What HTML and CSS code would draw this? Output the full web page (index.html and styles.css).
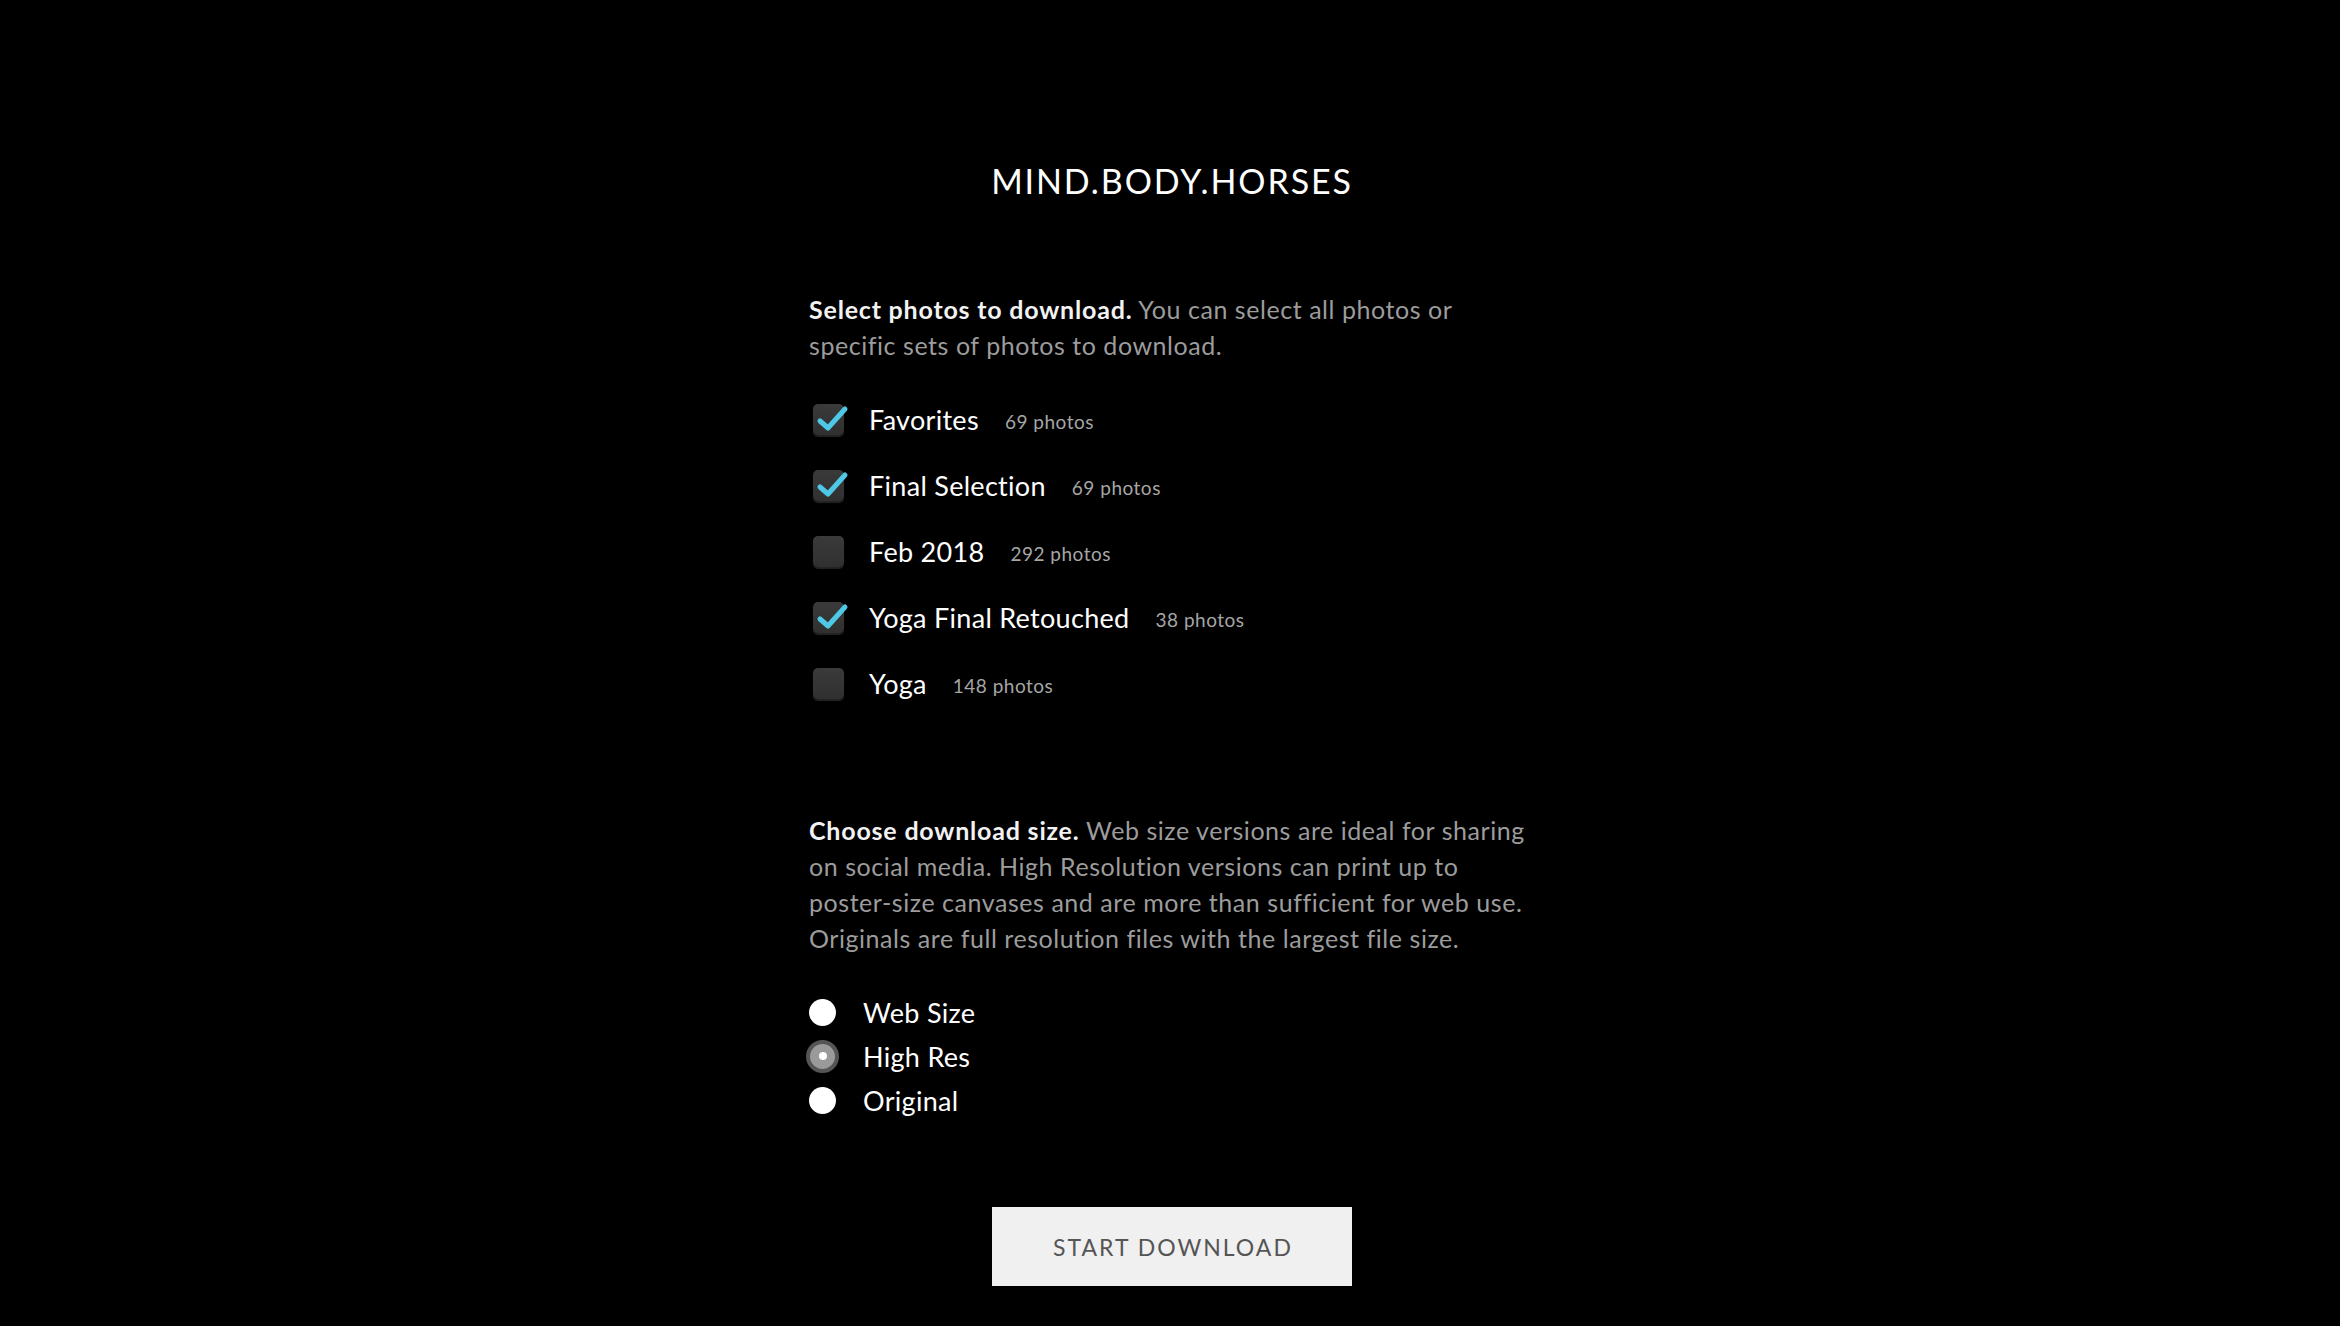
FILE: index.html
```html
<!DOCTYPE html>
<html lang="en">
<head>
<meta charset="utf-8">
<title>MIND.BODY.HORSES — Download</title>
<link rel="stylesheet" href="styles.css">
</head>
<body>
<main class="page">
  <h1 class="title">MIND.BODY.HORSES</h1>

  <p class="intro intro-sets"><strong>Select photos to download.</strong> You can select all photos or specific sets of photos to download.</p>

  <ul class="sets">
    <li class="set">
      <span class="box checked"><svg class="tick" viewBox="0 0 40 40" width="40" height="40"><path d="M8 23 L16 30 L33 11"/></svg></span>
      <span class="set-name">Favorites</span><span class="set-count">69 photos</span>
    </li>
    <li class="set">
      <span class="box checked"><svg class="tick" viewBox="0 0 40 40" width="40" height="40"><path d="M8 23 L16 30 L33 11"/></svg></span>
      <span class="set-name">Final Selection</span><span class="set-count">69 photos</span>
    </li>
    <li class="set">
      <span class="box"></span>
      <span class="set-name">Feb 2018</span><span class="set-count">292 photos</span>
    </li>
    <li class="set">
      <span class="box checked"><svg class="tick" viewBox="0 0 40 40" width="40" height="40"><path d="M8 23 L16 30 L33 11"/></svg></span>
      <span class="set-name">Yoga Final Retouched</span><span class="set-count">38 photos</span>
    </li>
    <li class="set">
      <span class="box"></span>
      <span class="set-name">Yoga</span><span class="set-count">148 photos</span>
    </li>
  </ul>

  <p class="intro intro-size"><strong>Choose download size.</strong> Web size versions are ideal for sharing on social media. High Resolution versions can print up to poster-size canvases and are more than sufficient for web use. Originals are full resolution files with the largest file size.</p>

  <ul class="sizes">
    <li class="size"><span class="radio"></span><span class="size-name">Web Size</span></li>
    <li class="size"><span class="radio selected"></span><span class="size-name">High Res</span></li>
    <li class="size"><span class="radio"></span><span class="size-name">Original</span></li>
  </ul>

  <div class="actions">
    <button class="download" type="button">START DOWNLOAD</button>
  </div>
</main>
</body>
</html>
```

FILE: styles.css
```css
html, body {
  margin: 0;
  padding: 0;
  background: #000;
}

body {
  font-family: Lato, "Open Sans", "Liberation Sans", sans-serif;
  color: #fff;
  min-height: 1326px;
}

.page {
  width: 726px;
  margin: 0 auto;
  padding: 161px 0 0 4px;
  box-sizing: content-box;
  display: flex;
  flex-direction: column;
}

.title {
  margin: 0;
  text-align: center;
  font-size: 34px;
  line-height: 40px;
  font-weight: 400;
  letter-spacing: 1.9px;
  color: #fff;
}

.intro {
  margin: 0;
  font-size: 25px;
  line-height: 36px;
  letter-spacing: 0.55px;
  color: #9c9c9c;
}

.intro strong {
  color: #f2f2f2;
  font-weight: 700;
  letter-spacing: 0.8px;
}

.intro-sets {
  margin-top: 90px;
}

.sets, .sizes {
  list-style: none;
  margin: 0;
  padding: 0;
}

.sets {
  margin-top: 23px;
}

.set {
  height: 66px;
  display: flex;
  align-items: center;
}

.box {
  position: relative;
  flex: none;
  width: 31px;
  height: 31px;
  margin-left: 4px;
  margin-right: 1px;
  border-radius: 5px;
  background: linear-gradient(#3a3a3a, #303030);
  box-shadow: 0 2px 1px rgba(255, 255, 255, 0.14);
}

.tick {
  position: absolute;
  left: -1px;
  top: -6px;
  width: 40px;
  height: 40px;
  overflow: visible;
}

.tick path {
  fill: none;
  stroke: #4ec8e6;
  stroke-width: 5;
  stroke-linecap: round;
  stroke-linejoin: round;
}

.set-name {
  margin-left: 24px;
  font-size: 27px;
  letter-spacing: 0.3px;
  color: #fff;
}

.set-count {
  margin-left: 26px;
  font-size: 19px;
  letter-spacing: 0.5px;
  color: #a6a6a6;
  padding-top: 4px;
}

.intro-size {
  margin-top: 96px;
}

.sizes {
  margin-top: 34px;
}

.size {
  height: 44px;
  display: flex;
  align-items: center;
}

.radio {
  flex: none;
  box-sizing: border-box;
  width: 27px;
  height: 27px;
  border-radius: 50%;
  background: #fff;
  display: flex;
  align-items: center;
  justify-content: center;
}

.radio.selected {
  width: 33px;
  height: 33px;
  margin-left: -3px;
  margin-right: -3px;
  border: 4px solid #555;
  background: #9a9a9a;
}

.radio.selected::after {
  content: "";
  width: 8px;
  height: 8px;
  border-radius: 50%;
  background: #fff;
}

.size-name {
  margin-left: 27px;
  font-size: 27px;
  letter-spacing: 0.3px;
  color: #fff;
}

.actions {
  margin-top: 85px;
  display: flex;
  justify-content: center;
}

.download {
  width: 360px;
  height: 79px;
  border: 0;
  border-radius: 0;
  background: #f0f0f0;
  color: #555;
  font-family: Lato, "Open Sans", "Liberation Sans", sans-serif;
  font-size: 23px;
  letter-spacing: 2px;
  padding: 0 0 0 2px;
  cursor: pointer;
}
```
